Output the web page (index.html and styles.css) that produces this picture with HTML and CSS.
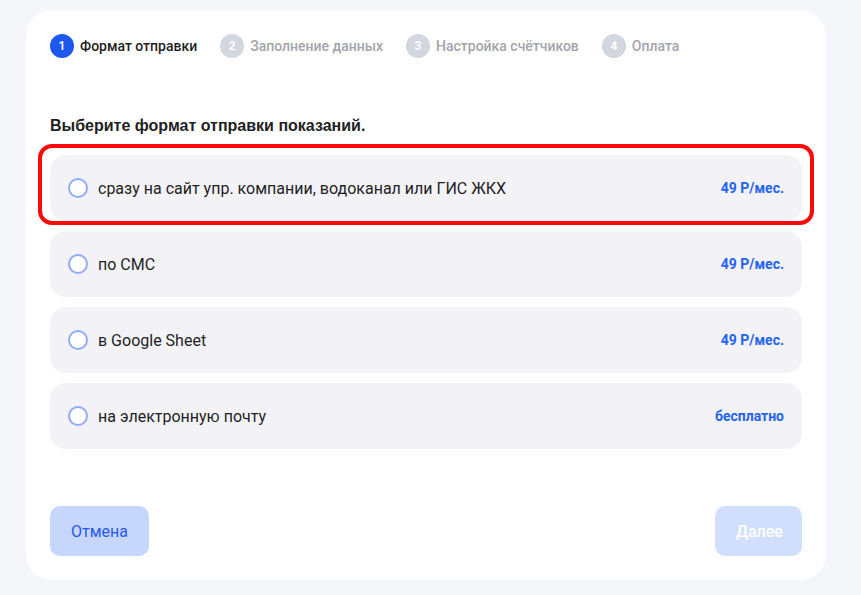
FILE: index.html
```html
<!DOCTYPE html>
<html>
	<head>
		<meta charset="UTF-8">
		<title>Формат отправки</title>
		<link rel="stylesheet" href="styles.css">
	</head>
	<body>
		<div class="card">
			<ul class="steps">
				<li class="step active"><span class="num">1</span>Формат отправки</li>
				<li class="step"><span class="num">2</span>Заполнение данных</li>
				<li class="step"><span class="num">3</span>Настройка счётчиков</li>
				<li class="step"><span class="num">4</span>Оплата</li>
			</ul>

			<h2 class="title">Выберите формат отправки показаний.</h2>

			<div class="options">
				<label class="option">
					<span class="radio"></span>
					<span class="label">сразу на сайт упр. компании, водоканал или ГИС ЖКХ</span>
					<span class="price">49 Р/мес.</span>
					<span class="mark"></span>
				</label>
				<label class="option">
					<span class="radio"></span>
					<span class="label">по СМС</span>
					<span class="price">49 Р/мес.</span>
				</label>
				<label class="option">
					<span class="radio"></span>
					<span class="label">в Google Sheet</span>
					<span class="price">49 Р/мес.</span>
				</label>
				<label class="option">
					<span class="radio"></span>
					<span class="label">на электронную почту</span>
					<span class="price">бесплатно</span>
				</label>
			</div>

			<div class="actions">
				<button class="btn cancel">Отмена</button>
				<button class="btn next">Далее</button>
			</div>
		</div>
	</body>
</html>
```

FILE: styles.css
```css
body {
	margin: 0;
	background-color: #f5f6fa;
	font-family: Roboto, "Liberation Sans", sans-serif;
	color: #1f1f24;
}
.card {
	width: 800px;
	height: 570px;
	box-sizing: border-box;
	margin: 10px 0 0 26px;
	padding: 24px 24px 24px 24px;
	background-color: #ffffff;
	border-radius: 26px;
	display: flex;
	flex-direction: column;
}
.steps {
	list-style-type: none;
	margin: 0;
	padding: 0;
	display: flex;
	gap: 23px;
}
.step {
	display: flex;
	align-items: center;
	gap: 6px;
	font-size: 14px;
	font-weight: 500;
	color: #a3a5ab;
	height: 24px;
}
.step.active {
	color: #1f1f24;
}
.num {
	width: 24px;
	height: 24px;
	border-radius: 50%;
	background-color: #d1d6df;
	color: #ffffff;
	font-size: 12px;
	font-weight: 600;
	display: flex;
	align-items: center;
	justify-content: center;
}
.active .num {
	background-color: #1c57ee;
}
.title {
	margin: 59px 0 20px 0;
	font-family: "Liberation Sans", Arial, sans-serif;
	font-size: 16px;
	font-weight: bold;
	line-height: 18px;
}
.options {
	display: flex;
	flex-direction: column;
	gap: 10px;
}
.option {
	position: relative;
	height: 66px;
	box-sizing: border-box;
	padding: 0 18px 0 18px;
	background-color: #f2f2f7;
	border-radius: 16px;
	display: flex;
	align-items: center;
}
.radio {
	width: 16px;
	height: 16px;
	border: 2px solid #92abf9;
	border-radius: 50%;
	margin-right: 10px;
	background-color: #ffffff;
}
.label {
	flex: 1;
	font-size: 16px;
}
.price {
	font-size: 14px;
	font-weight: bold;
	color: #2462f0;
}
/* red frame drawn over the first option */
.mark {
	position: absolute;
	left: -12px;
	top: -11px;
	right: -12px;
	bottom: -4px;
	border: 4px solid #fb0a0a;
	border-radius: 14px;
}
.actions {
	margin-top: auto;
	display: flex;
	justify-content: space-between;
}
.btn {
	height: 50px;
	border: none;
	border-radius: 10px;
	font-family: Roboto, "Liberation Sans", sans-serif;
	font-size: 16px;
	padding: 0 21px;
}
.cancel {
	background-color: #c6d6fc;
	color: #2659f0;
	width: 99px;
}
.next {
	background-color: #d2dffc;
	color: #ffffff;
	font-weight: 500;
	width: 87px;
}
```
